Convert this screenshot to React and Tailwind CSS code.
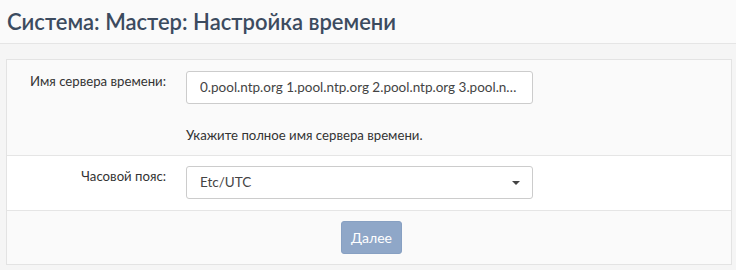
export default function App() {
  return (
    <div className="min-h-[270px] bg-[#f5f5f5] font-[Lato,sans-serif] text-[#333]">
      <header className="h-[44px] bg-[#fafafa] border-b border-[#e5e5e5] px-[7px] flex items-center">
        <h1 className="text-[22px] font-semibold text-[#3c4b5f] leading-none">Система: Мастер: Настройка времени</h1>
      </header>
      <div className="pt-[15px] pl-[6px] pr-[4px] pb-[5px]">
        <div className="border border-[#e3e3e3] bg-white">
          <div className="flex bg-[#fafafa] border-b border-[#e5e5e5] pt-[11px] pb-[11px]">
            <div className="w-[179px] shrink-0 pr-[20px] text-right text-[13.2px] leading-[20px]">Имя сервера времени:</div>
            <div className="w-[347px]">
              <div className="h-[33px] bg-white border border-[#ccc] rounded-[3px] px-[13px] flex items-center text-[13.5px] text-[#444]">
                <span className="truncate">0.pool.ntp.org 1.pool.ntp.org 2.pool.ntp.org 3.pool.ntp.org</span>
              </div>
              <div className="mt-[22px] text-[13.2px] leading-[18px] text-[#333]">Укажите полное имя сервера времени.</div>
            </div>
          </div>
          <div className="flex bg-white border-b border-[#e5e5e5] pt-[10px] pb-[11px]">
            <div className="w-[179px] shrink-0 pr-[20px] text-right text-[13.2px] leading-[20px]">Часовой пояс:</div>
            <div className="w-[347px] h-[33px] bg-white border border-[#ccc] rounded-[3px] pl-[13px] pr-[12px] flex items-center justify-between text-[13.5px] text-[#444]">
              <span>Etc/UTC</span>
              <svg width="8" height="4" viewBox="0 0 8 4" className="mt-[1px]"><path d="M0 0H8L4 4Z" fill="#444" /></svg>
            </div>
          </div>
          <div className="bg-[#fafafa] pt-[10px] pb-[10px] pl-[334px]">
            <button className="h-[33px] w-[61px] rounded-[3px] bg-[#8fa7c8] border border-[#87a0c2] text-white text-[14px]">Далее</button>
          </div>
        </div>
      </div>
    </div>
  );
}
